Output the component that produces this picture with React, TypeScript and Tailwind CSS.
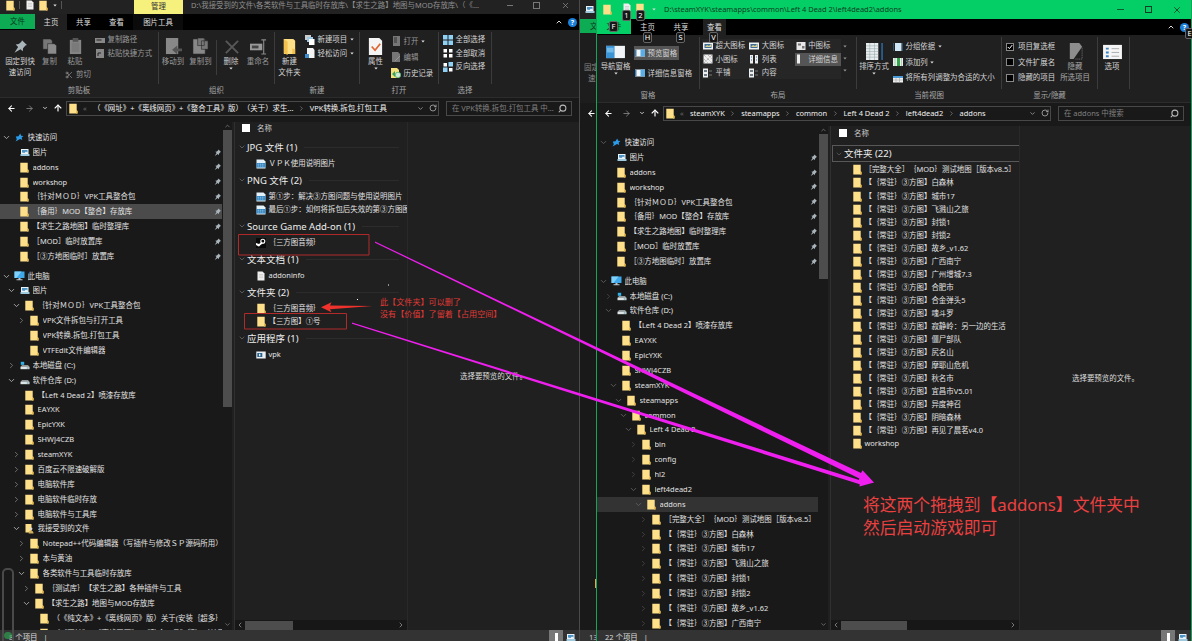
import React from 'react';
import { ArrowLeft, ArrowRight, ArrowUp, ChevronDown, ChevronLeft, ChevronRight, ChevronUp, RotateCw, Scissors, Search, X } from 'lucide-react';

type IconName =
  | 'folder' | 'star' | 'pictures' | 'pc' | 'driveC' | 'drive' | 'userFolder'
  | 'image' | 'steam' | 'text' | 'exe';

interface TreeItem {
  level: number;
  icon: IconName;
  label: string;
  arrow?: 'open' | 'closed';
  pinned?: boolean;
  active?: boolean;
}

const FileIcon: React.FC<{ name: IconName }> = ({ name }) => {
  switch (name) {
    case 'folder':
      return (
        <svg width="9" height="11" viewBox="0 0 9 11">
          <path d="M.3.7h7.400v6.6l.8.8v2.4h-8.200z" fill="#ffe08a" />
          <path d="M7 10.5V8.2l.7-.9.8.8v2.4z" fill="#e8b84a" />
        </svg>
      );
    case 'userFolder':
      return (
        <svg width="9" height="11" viewBox="0 0 9 11">
          <path d="M.5 1h6v8.5h-6z" fill="#ffe08a" />
          <circle cx="6" cy="5.8" r="1.4" fill="#d8d8d8" />
          <path d="M3.6 10.4c0-4 4.9-4 4.9 0z" fill="#cfae5c" />
        </svg>
      );
    case 'star':
      return (
        <svg width="9" height="9" viewBox="0 0 9 9">
          <path d="M5.2.6l1 2.2 2.3.1-1.8 1.7.5 2.5L5 6 2.4 7.4.5 8.5l1.3-2.2L.8 3.6l2.7-.3z" fill="#2c9be8" />
        </svg>
      );
    case 'pictures':
      return (
        <svg width="10" height="9" viewBox="0 0 10 9">
          <path d="M1 1h7.5v5H1z" fill="#e9f4fb" />
          <path d="M2 2h5.5v2.6L6 3.6 4.4 5 2 4.5z" fill="#4c93c4" />
          <path d="M.5 6h9v2h-9z" fill="#9fc9dd" />
        </svg>
      );
    case 'pc':
      return (
        <svg width="11" height="10" viewBox="0 0 11 10">
          <path d="M.5.5h10v6.5H.5z" fill="#3fa9ec" />
          <path d="M.5.5h7l-5 6.5h-2z" fill="#7fd0fa" />
          <path d="M4.5 7h2v1.3h2v1h-6v-1h2z" fill="#b9c6d0" />
        </svg>
      );
    case 'driveC':
    case 'drive':
      return (
        <svg width="10" height="9" viewBox="0 0 10 9">
          {name === 'driveC' && <path d="M.8.8h3.4v3H.8z" fill="#2fb2e8" />}
          <path d="M2 4h6l1.5 2H.5z" fill="#8f9698" />
          <path d="M.5 5.8h9v2.4h-9z" fill="#dde4e6" />
          <path d="M6.8 6.6h1.8v.8H6.8z" fill="#39788a" />
        </svg>
      );
    case 'image':
      return (
        <svg width="10" height="10" viewBox="0 0 10 10">
          <path d="M.5.5h7l2 2v7h-9z" fill="#e3f1fa" />
          <path d="M.5 4h9v4.5h-9z" fill="#2c7fbd" />
          <path d="M1.5 5.2h7M1.5 7h7" stroke="#a9d8f5" strokeWidth=".8" strokeDasharray="1.6 .6" />
        </svg>
      );
    case 'steam':
      return (
        <svg width="10" height="10" viewBox="0 0 10 10">
          <path d="M0 0h10v10H0z" fill="#0a0a0a" />
          <circle cx="6.8" cy="3.2" r="2" fill="none" stroke="#fff" strokeWidth="1.1" />
          <path d="M0 5l3 1 3-2.4.6 2L4 7.4a1.5 1.5 0 0 1-2.6.4L0 7z" fill="#fff" />
        </svg>
      );
    case 'text':
      return (
        <svg width="8" height="10" viewBox="0 0 8 10">
          <path d="M.5.5h5l2 2v7h-7z" fill="#eee" />
          <path d="M2 3.5h4M2 5h4M2 6.5h4" stroke="#bbb" strokeWidth=".5" />
        </svg>
      );
    default:
      return (
        <svg width="10" height="8" viewBox="0 0 10 8">
          <path d="M.3.5h9.4v7H.3z" fill="#e8f0f6" />
          <path d="M1.3 2h5v4h-5z" fill="#28628f" />
          <path d="M3 2.8h1.4v2.4H3z" fill="#e8f0f6" />
        </svg>
      );
  }
};

const PinIcon: React.FC<{ size: number }> = ({ size }) => (
  <svg width={size} height={size} viewBox="0 0 10 10">
    <path d="M6 .8L9.3 4l-1 .4-1.6 1.8-.2 2L5 6.8 1 9.2l2.4-3.9-1.6-1.6 2.1-.3 1.7-1.6z" fill="#a9b4bb" />
  </svg>
);

// Ribbon glyphs drawn on a 20x18 grid
const glyphs = {
  copy: (
    <g stroke="#222" strokeWidth=".6">
      <path d="M3 1h8l2 2v9H3z" fill="#777" />
      <path d="M8 6h7l2.5 2v9H8z" fill="#8b8b8b" />
    </g>
  ),
  paste: (
    <g>
      <path d="M4 2h12v15H4z" fill="#858585" />
      <path d="M7 0h6v4H7z" fill="#555" />
      <path d="M6 5h8v10H6z" fill="#7a7a7a" />
    </g>
  ),
  moveTo: (
    <g>
      <path d="M2 0h13v17H2z" fill="#888" />
      <path d="M19 14h-5v3.5L8.500 12.500 14 8v3h5z" fill="#555" />
    </g>
  ),
  copyTo: (
    <g stroke="#222" strokeWidth=".6">
      <path d="M2 1h13v16H2z" fill="#888" />
      <path d="M7 0h7v8H7zM11 3h7v9h-7z" fill="#777" />
    </g>
  ),
  remove: <path d="M4 3l13 13M17 3L4 16" stroke="#585858" strokeWidth="2" />,
  rename: (
    <g>
      <path d="M1 6h13v7H1z" fill="#999" />
      <path d="M3 8h7v3H3z" fill="#444" />
      <path d="M13 2h5M15.500 2v15M13 17h5" stroke="#888" strokeWidth="1.200" />
    </g>
  ),
  folder: (
    <g>
      <path d="M4 1h10l2 2v14H4z" fill="#ffdf85" />
      <path d="M4 1l4 3v14l-4-2zM13 11l3 1v5h-3z" fill="#f3c04e" />
    </g>
  ),
  props: (
    <g>
      <path d="M3 0h11l3 3v15H3z" fill="#f4f4f4" />
      <path d="M6 9l3.500 4L15 6" fill="none" stroke="#dd6430" strokeWidth="1.800" />
    </g>
  ),
  navPane: (
    <g>
      <path d="M0 3h20v13H0z" fill="#f1f5f7" />
      <path d="M0 3h9v13H0z" fill="#3a93d5" />
      <path d="M1 5h7v5H1z" fill="#72b9e7" />
    </g>
  ),
  sort: (
    <g>
      <path d="M1 0h13v18H1z" fill="#e7ecee" />
      <path d="M1 3h13M1 6h13M1 9h13M1 12h13M1 15h13M5 0v18M10 0v18" stroke="#9aa" strokeWidth=".6" />
      <path d="M18 0v18" stroke="#2a6fb0" strokeWidth="1.500" />
    </g>
  ),
  hide: (
    <g>
      <path d="M4 0h10l3 4-9 13H4z" fill="#8d8d8d" />
      <path d="M17 5v12H9" fill="none" stroke="#777" strokeDasharray="1 1" />
    </g>
  ),
  options: (
    <g>
      <path d="M0 2h20v15H0z" fill="#f5f5f5" />
      <path d="M3 6h3M3 10h3M3 14h3" stroke="#3c80bd" strokeWidth="2" />
      <path d="M9 6h8M9 10h8M9 14h8" stroke="#aaa" />
    </g>
  ),
};

type Glyph = keyof typeof glyphs;

const smallGlyphs = {
  path: <g><path d="M0 3h10v5H0z" fill="#888" /><path d="M1.500 5h5" stroke="#222" /></g>,
  shortcut: <g><path d="M1 1h8v9H1z" fill="#888" /><path d="M3 8V5h3" stroke="#222" fill="none" /></g>,
  newItem: <g><path d="M0 0h6v5H0z" fill="#ccc" /><path d="M2 2h6v5H2z" fill="#9cc9e6" /><path d="M4 4h5.500v6H4z" fill="#fff" /></g>,
  easy: <g><path d="M2 0h6l1.500 2v8H2z" fill="#f4f4f4" /><path d="M0 6h4v4H0z" fill="#3b8fd0" /></g>,
  open: <g><path d="M2 0h7v10H2z" fill="#777" /><path d="M3 2h3M3 4h3M3 6h3" stroke="#333" /></g>,
  edit: <g><path d="M1 0h6l2 2v8H1z" fill="#777" /><path d="M4 9l5-5" stroke="#999" /></g>,
  history: <g><path d="M0 0h6l2 2v8H0z" fill="#f3e27d" /><path d="M1 6l3-3v6z" fill="#3ba35c" /><circle cx="7" cy="7" r="2.800" fill="#cfe9d9" stroke="#3ba35c" strokeWidth=".7" /></g>,
  selectAll: <g fill="#8fd0f5"><path d="M0 0h4.500v4.500H0zM5.500 0H10v4.500H5.500zM0 5.500h4.500V10H0zM5.500 5.500H10V10H5.500z" /></g>,
  selectNone: <g fill="#fff"><path d="M.5 1h3.500v3.500H.5zM6 1h3.500v3.500H6zM.5 6H4v3.500H.5zM6 6h3.500v3.500H6z" /></g>,
  invert: <g><path d="M0 5.500h4.500V10H0zM5.500 0H10v4.500H5.500z" fill="#8fd0f5" /><path d="M.5 1h3.500v3.500H.5zM6 6h3.500v3.500H6z" fill="#fff" /></g>,
  pane: <g><path d="M0 1.500h10v7H0z" fill="#f2f6f8" /><path d="M5.500 1.500H10v7H5.500z" fill="#5aaee5" /><path d="M0 1.500h1.500v7H0z" fill="#3a7fb5" /></g>,
  picture: <g><path d="M0 1.500h10v7H0z" fill="#eef3f6" /><path d="M1.500 3h7v4h-7z" fill="#406c97" /><path d="M2 6l2-2 2 1 2-2v3z" fill="#d9d08a" /></g>,
  pictureMid: <g><path d="M.5 1h9v8h-9z" fill="#e8e8e8" /><path d="M2 2.500h3v2H2zM6 5h2.500v2.500H6z" fill="#777" /></g>,
  dots: <g><path d="M.5.5h9v9h-9z" fill="#eee" /><path d="M1 1l8 8M5 1l4 4M1 5l4 4M9 1L1 9" stroke="#888" strokeWidth=".8" strokeDasharray="1 1" /></g>,
  list: <g><path d="M1 1h3v8.500H1zM6 1h3v8.500H6z" fill="#eee" /><path d="M2 3h1M2 6h1M7 3h1M7 6h1" stroke="#2f6ea5" /></g>,
  detail: <g><path d="M1 .5h3v9H1z" fill="#eee" /></g>,
  tile: <g><path d="M0 .5h5v9H0z" fill="#eee" /><path d="M1 3h3M1 7h3" stroke="#456" strokeWidth="1.400" /><path d="M6 3h3M6 7h3" stroke="#777" /></g>,
  group: <g><path d="M2 1h6.500v8H2z" fill="#cfe6f7" /><path d="M0 1v8M10 1v8" stroke="#4a90c8" strokeWidth=".8" /></g>,
  addCol: <g><path d="M0 1h10v8H0z" fill="#e8efe9" /><path d="M4 1h3v8H4z" fill="#35a34e" /><path d="M2 1v8M8.500 1v8" stroke="#8a9" strokeWidth=".6" /></g>,
  fitCol: <g><path d="M0 3h10v6.500H0z" fill="#eee" /><path d="M0 3h10v2H0z" fill="#4a9bd5" /><path d="M3 5v5M6.500 5v5M0 7h10" stroke="#999" strokeWidth=".5" /></g>,
};

type SmallGlyph = keyof typeof smallGlyphs;

const SmallIcon: React.FC<{ name: SmallGlyph }> = ({ name }) => (
  <svg width="10" height="10" viewBox="0 0 10 10" className="shrink-0">{smallGlyphs[name]}</svg>
);

const Caret = () => (
  <svg width="4" height="3" viewBox="0 0 4 3" className="shrink-0">
    <path d="M.3.5h3.400L2 2.500z" fill="#ddd" />
  </svg>
);

const Big: React.FC<{
  className: string;
  glyph?: Glyph;
  lines: string[];
  caret?: boolean;
  children?: React.ReactNode;
}> = ({ className, glyph, lines, caret, children }) => (
  <div className={`flex shrink-0 flex-col items-center pt-1.5 ${className}`}>
    <div className="flex h-[20px] items-center">
      {glyph ? <svg width="19" height="17" viewBox="0 0 20 18">{glyphs[glyph]}</svg> : <PinIcon size={15} />}
    </div>
    {lines.map((line) => <div key={line} className="h-[11px] leading-[11px]">{line}</div>)}
    {caret && <Caret />}
    {children}
  </div>
);

const Small: React.FC<{ icon: SmallGlyph; label: string; caret?: boolean; className?: string }> = ({ icon, label, caret, className = 'h-[13.500px]' }) => (
  <div className={`flex items-center gap-[2.5px] ${className}`}>
    <SmallIcon name={icon} />
    <span>{label}</span>
    {caret && <Caret />}
  </div>
);

const Group: React.FC<{ label?: string; className: string; children: React.ReactNode }> = ({ label, className, children }) => (
  <div className={`flex h-[68px] shrink-0 ${className}`}>
    <div className="flex min-w-0 flex-1 flex-col items-center">
      <div className="flex h-[54px] w-full">{children}</div>
      <div className="h-3 leading-3 text-[#a8a8a8]">{label}</div>
    </div>
    <div className="mt-0.5 h-[52px] w-px bg-[#3c3c3c]" />
  </div>
);

const quickAccess: TreeItem[] = [
  { level: 0, icon: 'star', label: '快速访问', arrow: 'open' },
  { level: 1, icon: 'pictures', label: '图片', pinned: true },
  { level: 1, icon: 'folder', label: 'addons', pinned: true },
  { level: 1, icon: 'folder', label: 'workshop', pinned: true },
  { level: 1, icon: 'folder', label: '｛针对ＭＯＤ｝VPK工具整合包', pinned: true },
  { level: 1, icon: 'folder', label: '｛备用｝MOD【整合】存放库', pinned: true },
  { level: 1, icon: 'folder', label: '【求生之路地图】临时整理库', pinned: true },
  { level: 1, icon: 'folder', label: '［MOD］临时放置库', pinned: true },
  { level: 1, icon: 'folder', label: '［③方地图临时］放置库', pinned: true },
];

const leftTree: TreeItem[] = [
  { level: 0, icon: 'pc', label: '此电脑', arrow: 'open' },
  { level: 1, icon: 'pictures', label: '图片', arrow: 'open' },
  { level: 2, icon: 'folder', label: '｛针对ＭＯＤ｝VPK工具整合包', arrow: 'open' },
  { level: 3, icon: 'folder', label: 'VPK文件拆包与打开工具', arrow: 'closed' },
  { level: 3, icon: 'folder', label: 'VPK转换.拆包.打包工具' },
  { level: 3, icon: 'folder', label: 'VTFEdit文件编辑器' },
  { level: 1, icon: 'driveC', label: '本地磁盘 (C:)', arrow: 'closed' },
  { level: 1, icon: 'drive', label: '软件仓库 (D:)', arrow: 'open' },
  { level: 2, icon: 'folder', label: '【Left 4 Dead 2】喷漆存放库' },
  { level: 2, icon: 'folder', label: 'EAYXK' },
  { level: 2, icon: 'folder', label: 'EpicYXK' },
  { level: 2, icon: 'folder', label: 'SHWJ4CZB' },
  { level: 2, icon: 'folder', label: 'steamXYK', arrow: 'closed' },
  { level: 2, icon: 'folder', label: '百度云不限速破解版', arrow: 'closed' },
  { level: 2, icon: 'folder', label: '电脑软件库', arrow: 'closed' },
  { level: 2, icon: 'folder', label: '电脑软件临时存放', arrow: 'closed' },
  { level: 2, icon: 'folder', label: '电脑软件与工具库', arrow: 'closed' },
  { level: 2, icon: 'userFolder', label: '我接受到的文件', arrow: 'open' },
  { level: 3, icon: 'folder', label: 'Notepad++代码编辑器（写插件与修改ＳＰ源码所用）', arrow: 'closed' },
  { level: 3, icon: 'folder', label: '本与黄油', arrow: 'closed' },
  { level: 3, icon: 'folder', label: '各类软件与工具临时存放库', arrow: 'open' },
  { level: 4, icon: 'folder', label: '｛测试库｝【求生之路】各种插件与工具', arrow: 'closed' },
  { level: 4, icon: 'folder', label: '【求生之路】地图与MOD存放库', arrow: 'open' },
  { level: 5, icon: 'folder', label: '（《纯文本》+《离线网页》版）关于(安装｛超多｝' },
  { level: 5, icon: 'folder', label: '（《网址》+《离线网页》+《整合工具》版）（关于）' },
];

const addons = [
  '［完整大全］｛MOD｝测试地图［版本v8.5］',
  '【｛常驻｝③方图】白森林',
  '【｛常驻｝③方图】城市17',
  '【｛常驻｝③方图】飞溅山之旅',
  '【｛常驻｝③方图】封锁1',
  '【｛常驻｝③方图】封锁2',
  '【｛常驻｝③方图】故乡_v1.62',
  '【｛常驻｝③方图】广西南宁',
  '【｛常驻｝③方图】广州增城7.3',
  '【｛常驻｝③方图】合肥市',
  '【｛常驻｝③方图】合金弹头5',
  '【｛常驻｝③方图】魂斗罗',
  '【｛常驻｝③方图】寂静岭：另一边的生活',
  '【｛常驻｝③方图】僵尸部队',
  '【｛常驻｝③方图】尻名山',
  '【｛常驻｝③方图】摩耶山危机',
  '【｛常驻｝③方图】秋名市',
  '【｛常驻｝③方图】宜昌市V5.01',
  '【｛常驻｝③方图】异度神召',
  '【｛常驻｝③方图】阴暗森林',
  '【｛常驻｝③方图】再见了晨茗v4.0',
  'workshop',
];

const rightTree: TreeItem[] = [
  { level: 0, icon: 'pc', label: '此电脑', arrow: 'open' },
  { level: 1, icon: 'driveC', label: '本地磁盘 (C:)', arrow: 'closed' },
  { level: 1, icon: 'drive', label: '软件仓库 (D:)', arrow: 'open' },
  { level: 2, icon: 'folder', label: '【Left 4 Dead 2】喷漆存放库' },
  { level: 2, icon: 'folder', label: 'EAYXK' },
  { level: 2, icon: 'folder', label: 'EpicYXK' },
  { level: 2, icon: 'folder', label: 'SHWJ4CZB' },
  { level: 2, icon: 'folder', label: 'steamXYK', arrow: 'open' },
  { level: 3, icon: 'folder', label: 'steamapps', arrow: 'open' },
  { level: 4, icon: 'folder', label: 'common', arrow: 'open' },
  { level: 5, icon: 'folder', label: 'Left 4 Dead 2', arrow: 'open' },
  { level: 6, icon: 'folder', label: 'bin', arrow: 'closed' },
  { level: 6, icon: 'folder', label: 'config', arrow: 'closed' },
  { level: 6, icon: 'folder', label: 'hl2', arrow: 'closed' },
  { level: 6, icon: 'folder', label: 'left4dead2', arrow: 'open' },
  { level: 7, icon: 'folder', label: 'addons', arrow: 'open', active: true },
  ...addons.slice(0, 8).map((label): TreeItem => ({ level: 8, icon: 'folder', label, arrow: 'closed' })),
];

const fileGroups: { title: string; files: { icon: IconName; name: string }[] }[] = [
  { title: 'JPG 文件 (1)', files: [{ icon: 'image', name: 'ＶＰＫ使用说明图片' }] },
  {
    title: 'PNG 文件 (2)',
    files: [
      { icon: 'image', name: '第①步：解决③方图问题与使用说明图片' },
      { icon: 'image', name: '最后①步：如何将拆包后失效的第③方图图片' },
    ],
  },
  { title: 'Source Game Add-on (1)', files: [{ icon: 'steam', name: '｛三方图音频｝' }] },
  { title: '文本文档 (1)', files: [{ icon: 'text', name: 'addoninfo' }] },
  {
    title: '文件夹 (2)',
    files: [
      { icon: 'folder', name: '｛三方图音频｝' },
      { icon: 'folder', name: '【三方图】①号' },
    ],
  },
  { title: '应用程序 (1)', files: [{ icon: 'exe', name: 'vpk' }] },
];

const TreeRow: React.FC<{ item: TreeItem; dim?: boolean; activeClass: string }> = ({ item, dim, activeClass }) => (
  <div
    className={`flex h-[14.880px] shrink-0 items-center ${item.active ? activeClass : ''}`}
    style={{ paddingLeft: item.level * 5 + 1.5 }}
  >
    <div className={`flex w-2.5 shrink-0 justify-center ${dim ? 'text-[#5c5c5c]' : 'text-[#aaa]'}`}>
      {item.arrow === 'open' && <ChevronDown size={9} strokeWidth={2.5} />}
      {item.arrow === 'closed' && <ChevronRight size={9} strokeWidth={2.2} className="opacity-70" />}
    </div>
    <div className="flex w-4 shrink-0 justify-center"><FileIcon name={item.icon} /></div>
    <div className="min-w-0 flex-1 overflow-hidden">{item.label}</div>
    {item.pinned && <div className="mr-[1px]"><PinIcon size={7.5} /></div>}
  </div>
);

const Tree: React.FC<{
  quick: TreeItem[];
  items: TreeItem[];
  dim?: boolean;
  activeClass: string;
  className: string;
  thumb: string;
}> = ({ quick, items, dim, activeClass, className, thumb }) => (
  <div className="flex shrink-0 overflow-hidden bg-[#191919]">
    <div className={`flex flex-col overflow-hidden ${className}`}>
      {quick.map((item) => <TreeRow key={item.label} item={item} dim={dim} activeClass={activeClass} />)}
      <div className="h-[4.800px] shrink-0" />
      {items.map((item, i) => <TreeRow key={i} item={item} dim={dim} activeClass={activeClass} />)}
    </div>
    <div className="flex w-[10px] flex-col items-center text-[#999]">
      <ChevronUp size={7} className="h-2 shrink-0" />
      <div className={`w-[9px] shrink-0 bg-[#4d4d4d] ${thumb}`} />
      <div className="flex-1" />
      <ChevronDown size={7} className="mb-0.5 shrink-0" />
    </div>
  </div>
);

const HScroll: React.FC<{ thumb: string }> = ({ thumb }) => (
  <div className="flex h-[10px] shrink-0 items-center bg-[#171717] pr-0.5 text-[#aaa]">
    <ChevronLeft size={8} className="mx-[1px]" />
    <div className={`h-[9px] bg-[#4d4d4d] ${thumb}`} />
    <div className="flex-1" />
    <ChevronRight size={8} />
  </div>
);

const AddressBar: React.FC<{ crumbs: string[]; search: string; className: string; box: string }> = ({ crumbs, search, className, box }) => (
  <div className={`flex shrink-0 items-center bg-[#191919] ${className}`}>
    <div className="flex w-[66px] shrink-0 items-center pl-[7px] text-white">
      <ArrowLeft size={9} strokeWidth={2.8} />
      <ArrowRight size={9} strokeWidth={2.2} className="ml-[9px] text-[#888]" />
      <ChevronDown size={6} strokeWidth={3} className="ml-[8px]" />
      <ArrowUp size={10} strokeWidth={2.8} className="ml-[5px]" />
    </div>
    <div className={`flex h-[15px] shrink-0 items-center border border-[#484848] pl-[2px] text-[#f2f2f2] ${box}`}>
      <FileIcon name="folder" />
      <span className="ml-[5px] w-[10px] text-[#666]">«</span>
      {crumbs.map((crumb, i) => (
        <React.Fragment key={crumb}>
          {i > 0 && <ChevronRight size={7} className="mx-[4.700px] shrink-0 text-[#999]" />}
          <span>{crumb}</span>
        </React.Fragment>
      ))}
      <div className="flex-1" />
      <ChevronDown size={7} strokeWidth={2.5} className="text-[#aaa]" />
      <RotateCw size={8} strokeWidth={2.5} className="ml-[5px] mr-[1px] text-[#aaa]" />
    </div>
    <div className="ml-[7px] flex h-[15px] w-[126px] shrink-0 items-center border border-[#484848] pl-[5px] pr-[4px] text-[#808080]">
      <span className="flex-1 overflow-hidden">{search}</span>
      <Search size={9} strokeWidth={2.8} className="-scale-x-100 text-[#bbb]" />
    </div>
  </div>
);

const GroupTitle: React.FC<{ title: string }> = ({ title }) => (
  <div className="flex h-5 items-center gap-[1px] pl-[3px]">
    <ChevronDown size={8} className="text-[#777]" />
    <span className="text-[9.500px] text-[#eee]">{title}</span>
    <div className="ml-1.5 mr-2 h-px flex-1 bg-[#2c2c2c]" />
  </div>
);

const FileRow: React.FC<{ icon: IconName; name: string; className: string }> = ({ icon, name, className }) => (
  <div className={`flex shrink-0 items-center gap-[2.500px] overflow-hidden ${className}`}>
    <div className="flex w-2.5 shrink-0 justify-center"><FileIcon name={icon} /></div>
    <span>{name}</span>
  </div>
);

const ColumnHead = () => (
  <div className="flex h-3 shrink-0 items-center gap-[7px] pl-[7px] text-[#ccc]">
    <div className="h-[8px] w-[8px] bg-white" />
    <span>名称</span>
  </div>
);

const StatusBar: React.FC<{ text: string; className: string }> = ({ text, className }) => (
  <div className={`flex h-[11px] shrink-0 items-center overflow-hidden bg-[#333] text-[#ddd] ${className}`}>
    <span className="pt-[3px]">{text}</span>
    <span className="ml-[6px] pt-[3px]">|</span>
    <div className="flex-1" />
    <div className="flex h-full w-[14px] items-end justify-center bg-[#777]"><div className="h-2 w-[3px] bg-white" /></div>
    <div className="ml-[3px] pt-1"><FileIcon name="pictures" /></div>
  </div>
);

const HelpIcon = () => (
  <div className="flex h-[9px] w-[9px] items-center justify-center rounded-full bg-[#1c7fd8] text-[7px] font-bold text-white">?</div>
);

const KeyTip: React.FC<{ label: string; className: string }> = ({ label, className }) => (
  <div className={`absolute flex h-[11px] w-[9px] items-center justify-center rounded-[2px] border border-[#666] bg-[#161616] text-[7.500px] text-white ${className}`}>
    {label}
  </div>
);

const LeftWindow = () => (
  <div className="flex w-[580px] shrink-0 flex-col border-r border-[#4a4a4a] bg-[#202020]">
    <div className="flex h-[14px] items-center bg-[#222]">
      <div className="flex w-[134px] items-center pb-[4px] pl-[6px]">
        <FileIcon name="folder" />
        <div className="ml-[4px] h-2 w-px bg-[#555]" />
        <div className="ml-[6px]"><FileIcon name="text" /></div>
        <div className="ml-[5px]"><FileIcon name="folder" /></div>
        <div className="ml-[5px]"><Caret /></div>
        <div className="ml-[4px] h-2 w-px bg-[#555]" />
      </div>
      <div className="h-full w-[49px] bg-[#f6f07c] pt-[1px] text-center leading-[10px] text-[#333]">管理</div>
      <div className="flex-1 whitespace-pre pb-[4px] pl-[8px] text-[#8f8f8f]">D:\我接受到的文件\各类软件与工具临时存放库\【求生之路】地图与MOD存放库\（《...</div>
      <div className="mb-[4px] mr-[20px] h-px w-[6px] bg-[#777]" />
      <div className="mb-[4px] mr-[21px] h-[7px] w-[7px] border border-[#777]" />
      <X size={9} className="mb-[4px] mr-[9px] text-[#888]" />
    </div>
    <div className="flex h-4 items-center bg-black text-[#ddd]">
      <div className="h-[15px] w-[35px] self-start bg-[#0cab54] text-center leading-[15px] text-[#06391d]">文件</div>
      <div className="h-4 w-[32px] bg-[#202020] text-center leading-4">主页</div>
      <div className="w-[33px] text-center">共享</div>
      <div className="w-[33px] text-center">查看</div>
      <div className="w-[50px] bg-[#0b0b0b] text-center leading-4">图片工具</div>
      <div className="flex-1" />
      <ChevronUp size={8} strokeWidth={3} className="mr-[5px]" />
      <HelpIcon />
      <div className="w-[2px]" />
    </div>
    <div className="flex h-[68px] border-b border-[#2c2c2c] text-[#d4d4d4]">
      <Group label="剪贴板" className="w-[159px]">
        <Big className="w-[40px]" lines={['固定到快', '速访问']} />
        <Big className="w-[19px] text-[#999]" glyph="copy" lines={['复制']} />
        <Big className="w-[32px] text-[#999]" glyph="paste" lines={['粘贴']}>
          <div className="mt-[2px] flex items-center gap-[3px] pl-[6px]">
            <Scissors size={8} />
            <span>剪切</span>
          </div>
        </Big>
        <div className="ml-[4px] pt-[3px] text-[#999]">
          <Small icon="path" label="复制路径" />
          <Small icon="shortcut" label="粘贴快捷方式" />
        </div>
      </Group>
      <Group label="组织" className="w-[116px] text-[#999]">
        <Big className="w-[28px]" glyph="moveTo" lines={['移动到']} />
        <Big className="w-[27px]" glyph="copyTo" lines={['复制到']} />
        <div className="ml-[2px] mt-[10px] h-[35px] w-px bg-[#3c3c3c]" />
        <Big className="w-[28px] text-[#ccc]" glyph="remove" lines={['删除']} caret />
        <Big className="w-[26px]" glyph="rename" lines={['重命名']} />
      </Group>
      <Group label="新建" className="w-[85px]">
        <Big className="w-[29px]" glyph="folder" lines={['新建', '文件夹']} />
        <div className="ml-[1px] pt-[3px]">
          <Small icon="newItem" label="新建项目" caret />
          <Small icon="easy" label="轻松访问" caret />
        </div>
      </Group>
      <Group label="打开" className="w-[79px]">
        <Big className="w-[31px]" glyph="props" lines={['属性']} caret />
        <div className="pt-[3px]">
          <Small icon="open" label="打开" caret className="h-4 text-[#999]" />
          <Small icon="edit" label="编辑" className="h-4 text-[#999]" />
          <Small icon="history" label="历史记录" className="h-4" />
        </div>
      </Group>
      <Group label="选择" className="w-[53px]">
        <div className="pl-[4px] pt-[3px]">
          <Small icon="selectAll" label="全部选择" />
          <Small icon="selectNone" label="全部取消" />
          <Small icon="invert" label="反向选择" />
        </div>
      </Group>
    </div>
    <AddressBar
      className="h-[20px]"
      box="w-[373px]"
      crumbs={['（《网址》+《离线网页》+《整合工具》版）（关于）求生...', 'VPK转换.拆包.打包工具']}
      search="在 VPK转换.拆包.打包工具 中..."
    />
    <div className="h-[4px] shrink-0 bg-[#191919]" />
    <div className="flex min-h-0 flex-1">
      <Tree
        quick={quickAccess.map((item, i) => ({ ...item, active: i === 5 }))}
        items={leftTree}
        activeClass="bg-[#4b4b4b]"
        className="w-[222px] pt-[8px]"
        thumb="h-[277px]"
      />
      <div className="ml-[2px] flex w-[174px] shrink-0 flex-col overflow-hidden border-l border-r border-l-[#303030] border-r-[#292929]">
        <ColumnHead />
        <div className="h-[3.400px] shrink-0" />
        {fileGroups.map((group) => (
          <div key={group.title}>
            <GroupTitle title={group.title} />
            {group.files.map((file) => <FileRow key={file.name} {...file} className="h-[13px] pl-[21px]" />)}
          </div>
        ))}
        <div className="flex-1" />
        <HScroll thumb="w-[48px]" />
      </div>
      <div className="flex flex-1 items-center justify-center text-[#ddd]">选择要预览的文件。</div>
    </div>
    <StatusBar text="8 个项目" className="pl-[9px] pr-[3px]" />
  </div>
);

// Sliver of a third explorer window visible between the two
const BackWindow = () => (
  <div className="flex w-4 shrink-0 flex-col overflow-hidden bg-[#1d1d1d] text-[#888]">
    <div className="flex h-[19px] items-center bg-[#222] pl-[5px]"><FileIcon name="pictures" /></div>
    <div className="h-[14px] bg-[#0cab54] pl-[10px] leading-[14px] text-[#06391d]">文件</div>
    <div className="flex h-[70px] flex-col pl-[4px] pt-[29px] leading-[11px]">
      <span>固定到快</span>
      <span className="pl-[4px]">速访问</span>
    </div>
    <div className="flex h-5 items-center bg-[#191919] pl-[7px] text-white"><ArrowLeft size={9} strokeWidth={2.8} className="shrink-0" /></div>
    <div className="flex flex-1 items-end justify-end bg-[#191919] pb-[42px]"><div className="h-[9px] w-[1px] bg-[#d8b04f]" /></div>
    <div className="h-[11px] bg-[#333] pl-[9px] leading-[14px] text-[#ccc]">13</div>
  </div>
);

const layouts: { icon: SmallGlyph; label: string }[] = [
  { icon: 'picture', label: '超大图标' },
  { icon: 'picture', label: '大图标' },
  { icon: 'pictureMid', label: '中图标' },
  { icon: 'dots', label: '小图标' },
  { icon: 'list', label: '列表' },
  { icon: 'detail', label: '详细信息' },
  { icon: 'tile', label: '平铺' },
  { icon: 'tile', label: '内容' },
];

const RightWindow = () => (
  <div className="relative flex min-w-0 flex-1 flex-col border-l border-r border-[#16a35a] bg-[#202020]">
    <div className="flex h-[19px] items-center bg-[#04cf66]">
      <div className="flex w-[67px] items-center pl-[6px]">
        <FileIcon name="folder" />
        <div className="ml-[11px] pb-[3px]"><FileIcon name="text" /></div>
        <div className="ml-[5px] pb-[3px]"><FileIcon name="folder" /></div>
        <div className="ml-[7px]"><Caret /></div>
      </div>
      <div className="flex-1 text-[#0b3d22]">D:\steamXYK\steamapps\common\Left 4 Dead 2\left4dead2\addons</div>
      <div className="mr-[21px] h-px w-[7px] bg-[#0b5a30]" />
      <div className="mr-[20px] h-[7px] w-[7px] border border-[#0b3d22]" />
      <X size={10} className="mr-[9px] text-[#0b3d22]" />
    </div>
    <div className="flex h-4 items-center bg-black text-[#ddd]">
      <div className="h-[15px] w-[34px] self-start bg-[#04cf66] text-center leading-[15px] text-[#06391d]">文件</div>
      <div className="w-[33px] text-center">主页</div>
      <div className="w-[34px] text-center">共享</div>
      <div className="ml-[5px] h-4 w-[23px] bg-[#202020] text-center leading-4">查看</div>
      <div className="flex-1" />
      <ChevronUp size={8} strokeWidth={3} className="mr-[5px]" />
      <HelpIcon />
      <div className="w-[2px]" />
    </div>
    <div className="flex h-[68px] border-b border-[#2c2c2c] text-[#d4d4d4]">
      <Group label="窗格" className="w-[103px]">
        <Big className="w-[37px]" glyph="navPane" lines={['导航窗格']} caret />
        <div className="pt-[11px]">
          <Small icon="pane" label="预览窗格" className="h-[14px] w-[45px] bg-[#555] pl-[1px]" />
          <Small icon="pane" label="详细信息窗格" className="mt-[6px] h-[14px] pl-[1px]" />
        </div>
      </Group>
      <Group label="布局" className="w-[157px]">
        <div className="ml-[2px] mt-[4px] grid h-[40px] w-[139px] shrink-0 grid-cols-3 bg-[#262626]">
          {layouts.map((item) => (
            <Small
              key={item.label}
              icon={item.icon}
              label={item.label}
              className={item.icon === 'detail' ? 'h-[13.500px] bg-[#555] pl-[1px]' : 'h-[13.500px] pl-[1px]'}
            />
          ))}
        </div>
        <div className="ml-[2px] flex flex-col gap-[9px] pt-[10px] opacity-60">
          <Caret />
          <Caret />
          <Caret />
        </div>
      </Group>
      <Group label="当前视图" className="w-[145px]">
        <Big className="w-[34px]" glyph="sort" lines={['排序方式']} caret />
        <div className="ml-[2px] pt-[4px]">
          <Small icon="group" label="分组依据" caret className="h-[15.500px]" />
          <Small icon="addCol" label="添加列" caret className="h-[15.500px]" />
          <Small icon="fitCol" label="将所有列调整为合适的大小" className="h-[15.500px]" />
        </div>
      </Group>
      <Group label="显示/隐藏" className="w-[96px]">
        <div className="w-[58px] shrink-0 pl-[4px] pt-[4px]">
          {['项目复选框', '文件扩展名', '隐藏的项目'].map((label, i) => (
            <div key={label} className="flex h-[15.500px] items-center gap-[4px]">
              <div className="flex h-[8px] w-[8px] items-center justify-center border border-[#888] bg-black">
                {i === 0 && (
                  <svg width="6" height="6" viewBox="0 0 6 6"><path d="M.8 3l1.600 1.600L5.300 1" fill="none" stroke="#fff" /></svg>
                )}
              </div>
              <span>{label}</span>
            </div>
          ))}
        </div>
        <Big className="w-[30px] text-[#aaa]" glyph="hide" lines={['隐藏', '所选项目']} />
      </Group>
      <Group className="w-[32px]">
        <Big className="w-[28px]" glyph="options" lines={['选项']} />
      </Group>
    </div>
    <AddressBar
      className="h-[20px]"
      box="w-[388px]"
      crumbs={['steamXYK', 'steamapps', 'common', 'Left 4 Dead 2', 'left4dead2', 'addons']}
      search="在 addons 中搜索"
    />
    <div className="h-[3px] shrink-0 bg-[#191919]" />
    <div className="flex min-h-0 flex-1">
      <Tree
        quick={quickAccess}
        items={rightTree}
        dim
        activeClass="bg-[#333]"
        className="w-[221px] pt-[9.100px]"
        thumb="h-[145px]"
      />
      <div className="ml-[2px] flex w-[190px] shrink-0 flex-col overflow-hidden border-l border-r border-l-[#303030] border-r-[#292929]">
        <div className="h-[1px] shrink-0" />
        <div className="pl-[1px]"><ColumnHead /></div>
        <div className="mb-[1.400px] ml-[1px] mt-[6px] flex h-[17px] shrink-0 items-center gap-[1px] border border-r-0 border-[#585858] pl-[2px]">
          <ChevronDown size={8} className="text-[#666]" />
          <span className="text-[9.500px] text-[#eee]">文件夹 (22)</span>
        </div>
        {addons.map((name) => <FileRow key={name} icon="folder" name={name} className="h-[13.050px] pl-[21px]" />)}
        <div className="flex-1" />
        <HScroll thumb="w-[66px]" />
      </div>
      <div className="flex flex-1 items-center justify-center text-[#ddd]">选择要预览的文件。</div>
    </div>
    <StatusBar text="22 个项目" className="pl-[8px] pr-[3px]" />

    <KeyTip label="F" className="left-[12px] top-[21px]" />
    <KeyTip label="1" className="left-[25px] top-[10px]" />
    <KeyTip label="2" className="left-[39px] top-[10px]" />
    <KeyTip label="H" className="left-[46px] top-[32px]" />
    <KeyTip label="S" className="left-[79px] top-[32px]" />
    <KeyTip label="V" className="left-[112px] top-[32px]" />
    <KeyTip label="E" className="right-[-3px] top-[28px]" />
  </div>
);

const Annotations = () => (
  <>
    <svg className="absolute inset-0" width="1192" height="641" viewBox="0 0 1192 641">
      <g fill="none" stroke="#b02a2a">
        <path d="M238.500 234.500h130.500v20.500h-130.500z" />
        <path d="M244.500 313.500h102v15.500h-102z" />
      </g>
      <path d="M321 307.300l10.500-5-1.500 3.300 42.500.4-42.500 3.200 1.500 3z" fill="#f0322d" />
      <g fill="#ef1fef">
        <path d="M375 241.500L580 339.300L861 473l1.500-2.800L874 482.500l-16 .5 1.300-4.500L580 342L375 242.700z" />
        <path d="M352 322.600L580 393.200L860 480.200l.8-3.200L874 482.500l-14.500 4 .2-2.200L580 396L352 323.800z" />
      </g>
      <path d="M388 284.500h1v1h-1zM357 299h1v1h-1z" fill="#fff" />
    </svg>
    <div className="absolute left-[380px] top-[295.500px] text-[8.100px] leading-3 text-[#e03a36]">
      <p>此【文件夹】可以删了</p>
      <p>没有【价值】了留着【占用空间】</p>
    </div>
    <div className="absolute left-[863px] top-[494px] text-[16.800px] leading-[22.500px] text-[#ea4040]">
      <p>将这两个拖拽到【addons】文件夹中</p>
      <p>然后启动游戏即可</p>
    </div>
    <div className="absolute left-[2px] top-[568px] flex h-[80px] w-[12px] flex-col justify-end rounded-[5px] border-2 border-[#4a4a4a] pb-[7px]">
      <div className="h-[7px] rounded-full bg-[#2f9e4f]/70" />
    </div>
  </>
);

export default function App() {
  return (
    <div className="relative flex h-[641px] w-[1192px] overflow-hidden whitespace-nowrap bg-[#191919] font-['Noto_Sans','Noto_Sans_CJK_SC',sans-serif] text-[7.450px] leading-[11px] text-[#e2e2e2] [font-kerning:none] [text-spacing-trim:space-all]">
      <LeftWindow />
      <BackWindow />
      <RightWindow />
      <Annotations />
    </div>
  );
}
